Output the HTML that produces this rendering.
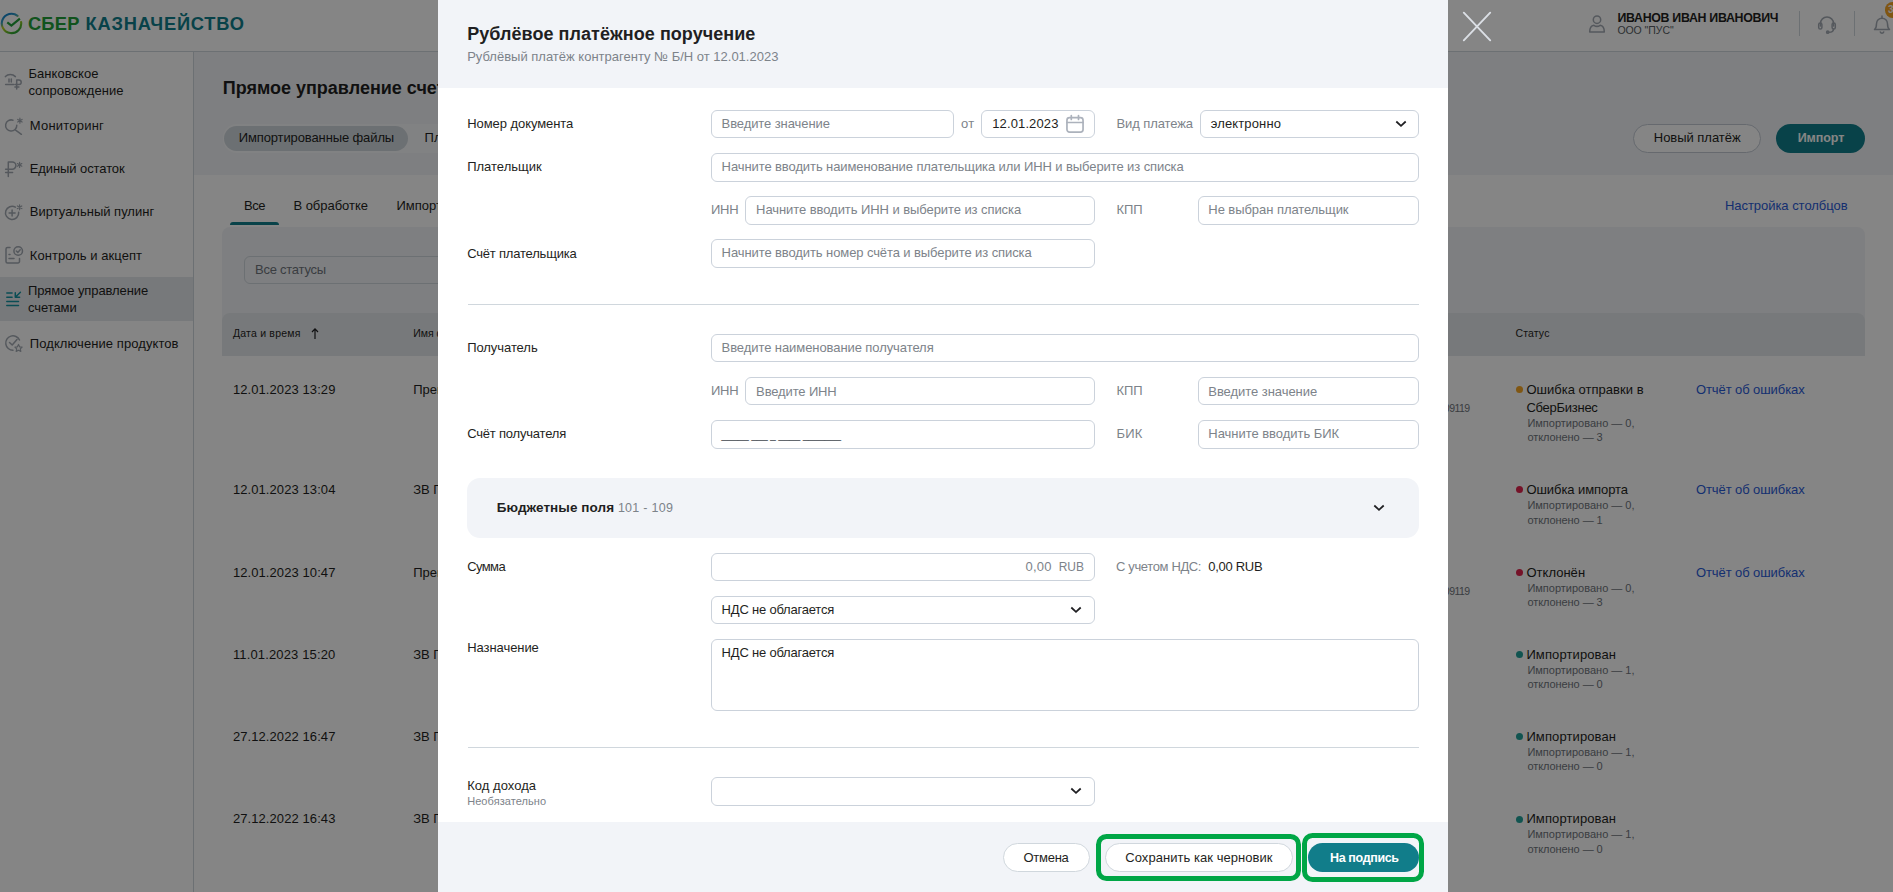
<!DOCTYPE html>
<html lang="ru"><head><meta charset="utf-8"><title>Рублёвое платёжное поручение</title>
<style>
html,body{margin:0;padding:0}
body{width:1893px;height:892px;overflow:hidden;position:relative;background:#fff;font-family:'Liberation Sans', sans-serif;color:#1f1f22}
.t{position:absolute;white-space:nowrap}
.b{position:absolute;box-sizing:border-box}
.i{position:absolute;overflow:visible}
.layer{position:absolute;left:0;top:0;width:1893px;height:892px;overflow:hidden}
#ov{background:rgba(0,0,0,.48)}
</style></head>
<body>
<div class="layer" id="page">
<div class="b" style="left:0px;top:0px;width:1893px;height:51px;background:#fff;"></div>
<div class="b" style="left:0px;top:51px;width:1893px;height:1px;background:#d0d7dd;"></div>
<div class="b" style="left:194px;top:52px;width:1699px;height:123px;background:#f2f4f7;"></div>
<div class="b" style="left:193px;top:52px;width:1px;height:840px;background:#d0d7dd;"></div>
<div class="b" style="left:0px;top:277px;width:193px;height:43.5px;background:#e4e8eb;"></div>
<svg class="i" style="left:0;top:10.5px" width="26" height="26" viewBox="0 0 26 26">
<defs><linearGradient id="lg" x1="0.2" y1="0" x2="0.75" y2="1"><stop offset="0" stop-color="#0a7fd0"/><stop offset=".28" stop-color="#3aa0c0"/><stop offset=".5" stop-color="#c9d21a"/><stop offset=".8" stop-color="#5cb82e"/><stop offset="1" stop-color="#21a038"/></linearGradient></defs>
<path d="M17.6 4.9 A9.7 9.7 0 1 0 21.1 11" fill="none" stroke="url(#lg)" stroke-width="2.1" stroke-linecap="round"/>
<path d="M7.3 11.3 L11.4 14.6 L19.9 7.6" fill="none" stroke="#21a038" stroke-width="2.2"/>
</svg>
<svg class="i" style="left:4px;top:72px" width="20" height="20" viewBox="0 0 20 20" fill="none" stroke="#a3aab3" stroke-width="1.5" stroke-linecap="round" stroke-linejoin="round"><path d="M1.4 4.6 C4 1.9 8.6 1.9 11.4 4.6"/><path d="M5 7 V10 M7.3 7 V10"/><path d="M1.6 12.5 H9.6"/><path d="M12.7 17 V8 H14.9 a2.3 2.3 0 0 1 0 4.6 H10.9 M10.9 14.9 H14.9"/></svg>
<svg class="i" style="left:4px;top:116px" width="20" height="20" viewBox="0 0 20 20" fill="none" stroke="#a3aab3" stroke-width="1.5" stroke-linecap="round" stroke-linejoin="round"><path d="M8.93 4.17 A5.6 5.6 0 1 0 12.8 9.3"/><path d="M11.6 14.2 L17.4 18.3"/><path d="M15.9 2.2 V7.2 M13.7 3.4000000000000004 L18.1 6.0 M18.1 3.4000000000000004 L13.7 6.0" stroke-width="1.2"/></svg>
<svg class="i" style="left:4px;top:159px" width="20" height="20" viewBox="0 0 20 20" fill="none" stroke="#a3aab3" stroke-width="1.5" stroke-linecap="round" stroke-linejoin="round"><path d="M4.3 17.5 V3 H8.3 a3.6 3.6 0 0 1 0 7.2 H1.6 M1.6 13.4 H8.6"/><path d="M15.6 3.4000000000000004 V8.4 M13.399999999999999 4.6000000000000005 L17.8 7.2 M17.8 4.6000000000000005 L13.399999999999999 7.2" stroke-width="1.2"/></svg>
<svg class="i" style="left:4px;top:202px" width="20" height="20" viewBox="0 0 20 20" fill="none" stroke="#a3aab3" stroke-width="1.5" stroke-linecap="round" stroke-linejoin="round"><path d="M11.4 5.18 A6.6 6.6 0 1 0 14.67 10.3"/><path d="M8.1 7.9 V13.9 M5.1 10.9 H11.1"/><path d="M15.6 2.8 V7.8 M13.399999999999999 4.0 L17.8 6.6 M17.8 4.0 L13.399999999999999 6.6" stroke-width="1.2"/></svg>
<svg class="i" style="left:4px;top:245px" width="20" height="20" viewBox="0 0 20 20" fill="none" stroke="#a3aab3" stroke-width="1.5" stroke-linecap="round" stroke-linejoin="round"><path d="M6 2.5 H3.5 a1.5 1.5 0 0 0 -1.5 1.5 V16.5 a1.5 1.5 0 0 0 1.5 1.5 H14 a1.5 1.5 0 0 0 1.5 -1.5 V13.5"/><circle cx="14.2" cy="6" r="4.3"/><path d="M12.3 6 L13.8 7.4 L16.2 4.8"/><path d="M5 9.5 H6 M5 13.5 H10"/></svg>
<svg class="i" style="left:4px;top:290px" width="20" height="20" viewBox="0 0 20 20" fill="none" stroke="#1595a3" stroke-width="1.5" stroke-linecap="round" stroke-linejoin="round"><path d="M2.8 3.1 H8.1 M2.8 7.3 H8.1 M2.8 11.5 H14.5 M2.8 15.5 H14.5"/><path d="M16.4 2.2 L11.5 7 M11.3 2.8 V7.3 H15.6"/></svg>
<svg class="i" style="left:4px;top:333px" width="20" height="20" viewBox="0 0 20 20" fill="none" stroke="#a3aab3" stroke-width="1.5" stroke-linecap="round" stroke-linejoin="round"><path d="M15.5 7 A7.2 7.2 0 1 0 9 17.2"/><path d="M5.5 9.5 L8.2 12 L13 6.5"/><path d="M14.5 11.5 l1.1 2.3 2.5 .3 -1.8 1.8 .5 2.5 -2.3 -1.2 -2.3 1.2 .5 -2.5 -1.8 -1.8 2.5 -.3z" stroke-width="1.2"/></svg>
<svg class="i" style="left:1587px;top:14px" width="20" height="20" viewBox="0 0 20 20" fill="none" stroke="#a3aab3" stroke-width="1.5" stroke-linecap="round" stroke-linejoin="round"><circle cx="10" cy="5.7" r="3.7"/><path d="M2.7 18 c0 -5 2 -6.3 4.2 -6.7 c2 1.4 4.2 1.4 6.2 0 c2.2 .4 4.2 1.7 4.2 6.7 z"/></svg>
<div class="b" style="left:1799px;top:11px;width:1px;height:25px;background:#d0d7dd;"></div>
<svg class="i" style="left:1817px;top:14px" width="20" height="20" viewBox="0 0 20 20" fill="none" stroke="#a3aab3" stroke-width="1.5" stroke-linecap="round" stroke-linejoin="round"><path d="M3.5 12 V9.5 a6.5 6.5 0 0 1 13 0 V12"/><rect x="1.7" y="9" width="3.2" height="6" rx="1.6"/><rect x="15.1" y="9" width="3.2" height="6" rx="1.6"/><path d="M16.5 15 c0 2.5 -2 3.3 -4.5 3.3"/><circle cx="10.7" cy="18.2" r="1.1" fill="#b5bbc3"/></svg>
<div class="b" style="left:1854px;top:11px;width:1px;height:25px;background:#d0d7dd;"></div>
<svg class="i" style="left:1872px;top:14px" width="20" height="20" viewBox="0 0 20 20" fill="none" stroke="#a3aab3" stroke-width="1.5" stroke-linecap="round" stroke-linejoin="round"><path d="M2.5 15.5 H17.5 c-1.7 -1.3 -2 -3 -2 -5.8 a5.5 5.5 0 0 0 -11 0 c0 2.8 -.3 4.5 -2 5.8z"/><path d="M10 2 V4 M8.3 18 a1.8 1.8 0 0 0 3.4 0"/></svg>
<div class="b" style="left:1884.5px;top:2px;width:15.5px;height:15.5px;border-radius:8px;background:#f5a623"></div>
<div class="b" style="left:223px;top:124.3px;width:537px;height:28.4px;background:#f8f9fb;border-radius:14px;"></div>
<div class="b" style="left:223.5px;top:126px;width:184.2px;height:25.2px;background:#d0d7dd;border-radius:13px;"></div>
<div class="b" style="left:1632.8px;top:123.9px;width:128.6px;height:28.8px;background:#fff;border:1px solid #c3cad4;border-radius:15px;"></div>
<div class="b" style="left:1776px;top:123.8px;width:89px;height:29.0px;background:#107f8c;border-radius:15px;"></div>
<div class="b" style="left:230px;top:221.5px;width:49px;height:3.5px;background:#107f8c;border-radius:3px 3px 0 0;"></div>
<div class="b" style="left:222px;top:227px;width:1643px;height:129px;background:#f2f4f7;border-radius:8px 8px 0 0;"></div>
<div class="b" style="left:222px;top:313.3px;width:1643px;height:42.3px;background:#e4e8eb;border-radius:8px 8px 0 0;"></div>
<div class="b" style="left:244px;top:256.3px;width:456px;height:28.0px;background:#f2f4f7;border:1px solid #d0d7dd;border-radius:6px;"></div>
<svg class="i" style="left:310px;top:327px" width="10" height="13" viewBox="0 0 10 13" fill="none" stroke="#1f1f22" stroke-width="1.2"><path d="M5 12 V2 M2 5 L5 1.8 L8 5"/></svg>
<div class="b" style="left:1516px;top:386.3px;width:7px;height:7px;border-radius:4px;background:#f5a623"></div>
<div class="b" style="left:1516px;top:486.3px;width:7px;height:7px;border-radius:4px;background:#e0244d"></div>
<div class="b" style="left:1516px;top:569.1px;width:7px;height:7px;border-radius:4px;background:#e0244d"></div>
<div class="b" style="left:1516px;top:651.1px;width:7px;height:7px;border-radius:4px;background:#21a19a"></div>
<div class="b" style="left:1516px;top:733.4px;width:7px;height:7px;border-radius:4px;background:#21a19a"></div>
<div class="b" style="left:1516px;top:815.9px;width:7px;height:7px;border-radius:4px;background:#21a19a"></div>
<div class="t" style="left:27.9px;top:12px;font-size:18.3px;line-height:23px;color:#21a038;font-weight:700;letter-spacing:0.241px;">СБЕР</div>
<div class="t" style="left:85.6px;top:12px;font-size:18.3px;line-height:23px;color:#107f8c;font-weight:700;letter-spacing:0.776px;">КАЗНАЧЕЙСТВО</div>
<div class="t" style="left:28.4px;top:65px;font-size:13px;line-height:17px;letter-spacing:0.064px;">Банковское</div>
<div class="t" style="left:28.4px;top:82px;font-size:13px;line-height:17px;letter-spacing:0.061px;">сопровождение</div>
<div class="t" style="left:29.8px;top:117px;font-size:13px;line-height:17px;letter-spacing:0.209px;">Мониторинг</div>
<div class="t" style="left:29.8px;top:160px;font-size:13px;line-height:17px;letter-spacing:-0.095px;">Единый остаток</div>
<div class="t" style="left:29.8px;top:203px;font-size:13px;line-height:17px;">Виртуальный пулинг</div>
<div class="t" style="left:29.8px;top:247px;font-size:13px;line-height:17px;letter-spacing:0.053px;">Контроль и акцепт</div>
<div class="t" style="left:28.0px;top:282px;font-size:13px;line-height:17px;letter-spacing:-0.081px;">Прямое управление</div>
<div class="t" style="left:28.0px;top:299px;font-size:13px;line-height:17px;letter-spacing:-0.082px;">счетами</div>
<div class="t" style="left:29.8px;top:335px;font-size:13px;line-height:17px;letter-spacing:0.080px;">Подключение продуктов</div>
<div class="t" style="left:1617.4px;top:10px;font-size:12.4px;line-height:16px;font-weight:700;letter-spacing:-0.314px;">ИВАНОВ ИВАН ИВАНОВИЧ</div>
<div class="t" style="left:1617.4px;top:23px;font-size:10.5px;line-height:14px;color:#565b62;letter-spacing:-0.054px;">ООО "ПУС"</div>
<div class="t" style="left:1887.9px;top:3px;font-size:10px;line-height:13px;color:#fff;font-weight:700;">3</div>
<div class="t" style="left:222.7px;top:77px;font-size:18px;line-height:22px;font-weight:700;">Прямое управление счетами</div>
<div class="t" style="left:238.7px;top:129px;font-size:13px;line-height:17px;letter-spacing:-0.116px;">Импортированные файлы</div>
<div class="t" style="left:424.6px;top:129px;font-size:13px;line-height:17px;">Платёжные документы</div>
<div class="t" style="left:1653.8px;top:129px;font-size:13px;line-height:17px;letter-spacing:-0.034px;">Новый платёж</div>
<div class="t" style="left:1797.7px;top:130px;font-size:12.5px;line-height:16px;color:#fff;font-weight:700;letter-spacing:-0.069px;">Импорт</div>
<div class="t" style="left:244.1px;top:197px;font-size:13px;line-height:17px;letter-spacing:-0.469px;">Все</div>
<div class="t" style="left:293.4px;top:197px;font-size:13px;line-height:17px;letter-spacing:-0.021px;">В обработке</div>
<div class="t" style="left:396.4px;top:197px;font-size:13px;line-height:17px;">Импортированы</div>
<div class="t" style="left:1724.9px;top:197px;font-size:13px;line-height:17px;color:#2a5bd7;letter-spacing:-0.036px;">Настройка столбцов</div>
<div class="t" style="left:255.0px;top:261px;font-size:13px;line-height:17px;color:#70767d;letter-spacing:-0.243px;">Все статусы</div>
<div class="t" style="left:232.9px;top:326px;font-size:10.5px;line-height:14px;letter-spacing:0.215px;">Дата и время</div>
<div class="t" style="left:413.2px;top:326px;font-size:10.5px;line-height:14px;">Имя файла</div>
<div class="t" style="left:1515.4px;top:326px;font-size:10.5px;line-height:14px;letter-spacing:0.166px;">Статус</div>
<div class="t" style="left:232.9px;top:381px;font-size:13px;line-height:17px;letter-spacing:0.086px;">12.01.2023 13:29</div>
<div class="t" style="left:413.2px;top:381px;font-size:13px;line-height:17px;">Препроцессинг.txt</div>
<div class="t" style="left:1526.4px;top:381px;font-size:13px;line-height:17px;letter-spacing:0.021px;">Ошибка отправки в</div>
<div class="t" style="left:1526.4px;top:399px;font-size:13px;line-height:17px;letter-spacing:-0.261px;">СберБизнес</div>
<div class="t" style="left:1527.4px;top:416px;font-size:11px;line-height:14px;color:#70767d;">Импортировано — 0,</div>
<div class="t" style="left:1527.4px;top:430px;font-size:11px;line-height:14px;color:#70767d;letter-spacing:-0.071px;">отклонено — 3</div>
<div class="t" style="left:1695.9px;top:381px;font-size:13px;line-height:17px;color:#2a5bd7;letter-spacing:-0.081px;">Отчёт об ошибках</div>
<div class="t" style="left:1364.4px;top:401px;font-size:10.5px;line-height:14px;color:#70767d;letter-spacing:-0.541px;">40702810000000009119</div>
<div class="t" style="left:232.9px;top:481px;font-size:13px;line-height:17px;letter-spacing:0.086px;">12.01.2023 13:04</div>
<div class="t" style="left:413.2px;top:481px;font-size:13px;line-height:17px;">ЗВ ПП 1.txt</div>
<div class="t" style="left:1526.4px;top:481px;font-size:13px;line-height:17px;letter-spacing:-0.065px;">Ошибка импорта</div>
<div class="t" style="left:1527.4px;top:498px;font-size:11px;line-height:14px;color:#70767d;">Импортировано — 0,</div>
<div class="t" style="left:1527.4px;top:513px;font-size:11px;line-height:14px;color:#70767d;letter-spacing:-0.071px;">отклонено — 1</div>
<div class="t" style="left:1695.9px;top:481px;font-size:13px;line-height:17px;color:#2a5bd7;letter-spacing:-0.081px;">Отчёт об ошибках</div>
<div class="t" style="left:232.9px;top:564px;font-size:13px;line-height:17px;letter-spacing:0.086px;">12.01.2023 10:47</div>
<div class="t" style="left:413.2px;top:564px;font-size:13px;line-height:17px;">Препроцессинг.txt</div>
<div class="t" style="left:1526.4px;top:564px;font-size:13px;line-height:17px;letter-spacing:0.031px;">Отклонён</div>
<div class="t" style="left:1527.4px;top:581px;font-size:11px;line-height:14px;color:#70767d;">Импортировано — 0,</div>
<div class="t" style="left:1527.4px;top:595px;font-size:11px;line-height:14px;color:#70767d;letter-spacing:-0.071px;">отклонено — 3</div>
<div class="t" style="left:1695.9px;top:564px;font-size:13px;line-height:17px;color:#2a5bd7;letter-spacing:-0.081px;">Отчёт об ошибках</div>
<div class="t" style="left:1364.4px;top:584px;font-size:10.5px;line-height:14px;color:#70767d;letter-spacing:-0.541px;">40702810000000009119</div>
<div class="t" style="left:232.9px;top:646px;font-size:13px;line-height:17px;letter-spacing:0.147px;">11.01.2023 15:20</div>
<div class="t" style="left:413.2px;top:646px;font-size:13px;line-height:17px;">ЗВ ПП 2.txt</div>
<div class="t" style="left:1526.4px;top:646px;font-size:13px;line-height:17px;letter-spacing:0.113px;">Импортирован</div>
<div class="t" style="left:1527.4px;top:663px;font-size:11px;line-height:14px;color:#70767d;">Импортировано — 1,</div>
<div class="t" style="left:1527.4px;top:677px;font-size:11px;line-height:14px;color:#70767d;letter-spacing:-0.071px;">отклонено — 0</div>
<div class="t" style="left:232.9px;top:728px;font-size:13px;line-height:17px;letter-spacing:0.086px;">27.12.2022 16:47</div>
<div class="t" style="left:413.2px;top:728px;font-size:13px;line-height:17px;">ЗВ ПП 3.txt</div>
<div class="t" style="left:1526.4px;top:728px;font-size:13px;line-height:17px;letter-spacing:0.113px;">Импортирован</div>
<div class="t" style="left:1527.4px;top:745px;font-size:11px;line-height:14px;color:#70767d;">Импортировано — 1,</div>
<div class="t" style="left:1527.4px;top:759px;font-size:11px;line-height:14px;color:#70767d;letter-spacing:-0.071px;">отклонено — 0</div>
<div class="t" style="left:232.9px;top:810px;font-size:13px;line-height:17px;letter-spacing:0.086px;">27.12.2022 16:43</div>
<div class="t" style="left:413.2px;top:810px;font-size:13px;line-height:17px;">ЗВ ПП 4.txt</div>
<div class="t" style="left:1526.4px;top:810px;font-size:13px;line-height:17px;letter-spacing:0.113px;">Импортирован</div>
<div class="t" style="left:1527.4px;top:827px;font-size:11px;line-height:14px;color:#70767d;">Импортировано — 1,</div>
<div class="t" style="left:1527.4px;top:842px;font-size:11px;line-height:14px;color:#70767d;letter-spacing:-0.071px;">отклонено — 0</div>
</div>
<div class="layer" id="ov"></div>
<div class="layer" id="modal">
<div class="b" style="left:438px;top:0px;width:1010px;height:892px;background:#fff;"></div>
<div class="b" style="left:438px;top:0px;width:1010px;height:87.6px;background:#f2f4f8;"></div>
<div class="b" style="left:438px;top:822px;width:1010px;height:70px;background:#f2f4f8;"></div>
<svg class="i" style="left:1462px;top:11px" width="30" height="31" viewBox="0 0 30 31" fill="none" stroke="#dbdfe5" stroke-width="1.9" stroke-linecap="round"><path d="M1.8 1.7 L28.2 29.3 M28.2 1.7 L1.8 29.3"/></svg>
<div class="b" style="left:711px;top:110px;width:242.6px;height:28px;background:#fff;border:1px solid #cbd2db;border-radius:6px;"></div>
<div class="b" style="left:981px;top:110px;width:113.6px;height:28px;background:#fff;border:1px solid #cbd2db;border-radius:6px;"></div>
<svg class="i" style="left:1065px;top:114px" width="20" height="20" viewBox="0 0 20 20" fill="none" stroke="#acb2bc" stroke-width="1.7" stroke-linecap="round"><rect x="1.95" y="3.55" width="16.1" height="14.5" rx="2.6"/><path d="M2 8.5 H18 M6.3 1.6 V5.4 M13.5 1.6 V5.4"/></svg>
<div class="b" style="left:1200px;top:110px;width:218.7px;height:28px;background:#fff;border:1px solid #cbd2db;border-radius:6px;"></div>
<svg class="i" style="left:1394.9px;top:119.9px" width="12" height="8" viewBox="0 0 12 8" fill="none" stroke="#1f1f22" stroke-width="1.75" stroke-linejoin="miter"><path d="M1.3 1.5 L6 5.8 L10.7 1.5"/></svg>
<div class="b" style="left:711px;top:153.2px;width:707.7px;height:28.4px;background:#fff;border:1px solid #cbd2db;border-radius:6px;"></div>
<div class="b" style="left:745px;top:196.3px;width:349.6px;height:28.4px;background:#fff;border:1px solid #cbd2db;border-radius:6px;"></div>
<div class="b" style="left:1198px;top:196.3px;width:220.7px;height:28.4px;background:#fff;border:1px solid #cbd2db;border-radius:6px;"></div>
<div class="b" style="left:711px;top:239px;width:383.6px;height:28.6px;background:#fff;border:1px solid #cbd2db;border-radius:6px;"></div>
<div class="b" style="left:467.5px;top:303.6px;width:951.2px;height:1.0px;background:#d0d7dd;"></div>
<div class="b" style="left:711px;top:334px;width:707.7px;height:27.7px;background:#fff;border:1px solid #cbd2db;border-radius:6px;"></div>
<div class="b" style="left:745px;top:377.2px;width:349.6px;height:28.3px;background:#fff;border:1px solid #cbd2db;border-radius:6px;"></div>
<div class="b" style="left:1198px;top:377.2px;width:220.7px;height:28.3px;background:#fff;border:1px solid #cbd2db;border-radius:6px;"></div>
<div class="b" style="left:711px;top:420.1px;width:383.6px;height:28.5px;background:#fff;border:1px solid #cbd2db;border-radius:6px;"></div>
<div class="b" style="left:1198px;top:420.1px;width:220.7px;height:28.5px;background:#fff;border:1px solid #cbd2db;border-radius:6px;"></div>
<div class="b" style="left:467.2px;top:478.3px;width:951.5px;height:59.5px;background:#f2f4f8;border-radius:13px;"></div>
<svg class="i" style="left:1373.3px;top:503.6px" width="12" height="8" viewBox="0 0 12 8" fill="none" stroke="#1f1f22" stroke-width="1.75" stroke-linejoin="miter"><path d="M1.3 1.5 L6 5.8 L10.7 1.5"/></svg>
<div class="b" style="left:711px;top:553px;width:383.6px;height:27.6px;background:#fff;border:1px solid #cbd2db;border-radius:6px;"></div>
<div class="b" style="left:711px;top:596.3px;width:383.6px;height:28.2px;background:#fff;border:1px solid #cbd2db;border-radius:6px;"></div>
<svg class="i" style="left:1070.3px;top:606.3px" width="12" height="8" viewBox="0 0 12 8" fill="none" stroke="#1f1f22" stroke-width="1.75" stroke-linejoin="miter"><path d="M1.3 1.5 L6 5.8 L10.7 1.5"/></svg>
<div class="b" style="left:711px;top:639.1px;width:707.7px;height:71.5px;background:#fff;border:1px solid #cbd2db;border-radius:6px;"></div>
<div class="b" style="left:467.5px;top:746.7px;width:951.2px;height:1.0px;background:#d0d7dd;"></div>
<div class="b" style="left:711px;top:777.4px;width:383.6px;height:28.3px;background:#fff;border:1px solid #cbd2db;border-radius:6px;"></div>
<svg class="i" style="left:1070.3px;top:787.3px" width="12" height="8" viewBox="0 0 12 8" fill="none" stroke="#1f1f22" stroke-width="1.75" stroke-linejoin="miter"><path d="M1.3 1.5 L6 5.8 L10.7 1.5"/></svg>
<div class="b" style="left:1002.5px;top:843px;width:87.0px;height:28.5px;background:#fff;border:1px solid #d0d7dd;border-radius:15px;"></div>
<div class="b" style="left:1096px;top:834px;width:204.8px;height:47px;border:5px solid #00a646;border-radius:10.5px;"></div>
<div class="b" style="left:1104.6px;top:843px;width:188.6px;height:28.5px;background:#fff;border:1px solid #d0d7dd;border-radius:15px;"></div>
<div class="b" style="left:1302.2px;top:833px;width:121.8px;height:49px;border:5px solid #00a646;border-radius:10.5px;"></div>
<div class="b" style="left:1308px;top:843px;width:110.9px;height:28.7px;background:#117d8a;border-radius:15px;"></div>
<div class="t" style="left:467.2px;top:23px;font-size:18px;line-height:22px;font-weight:700;letter-spacing:0.050px;">Рублёвое платёжное поручение</div>
<div class="t" style="left:467.2px;top:48px;font-size:13px;line-height:17px;color:#7d838a;">Рублёвый платёж контрагенту № Б/Н от 12.01.2023</div>
<div class="t" style="left:467.2px;top:115px;font-size:13px;line-height:17px;letter-spacing:-0.061px;">Номер документа</div>
<div class="t" style="left:721.6px;top:115px;font-size:13px;line-height:17px;color:#7d838a;letter-spacing:-0.090px;">Введите значение</div>
<div class="t" style="left:960.9px;top:115px;font-size:13px;line-height:17px;color:#7d838a;letter-spacing:0.497px;">от</div>
<div class="t" style="left:992.2px;top:115px;font-size:13px;line-height:17px;letter-spacing:0.132px;">12.01.2023</div>
<div class="t" style="left:1116.4px;top:115px;font-size:13px;line-height:17px;color:#7d838a;letter-spacing:-0.085px;">Вид платежа</div>
<div class="t" style="left:1210.7px;top:115px;font-size:13px;line-height:17px;letter-spacing:0.140px;">электронно</div>
<div class="t" style="left:467.2px;top:158px;font-size:13px;line-height:17px;">Плательщик</div>
<div class="t" style="left:721.6px;top:158px;font-size:13px;line-height:17px;color:#7d838a;letter-spacing:-0.093px;">Начните вводить наименование плательщика или ИНН и выберите из списка</div>
<div class="t" style="left:711.1px;top:201px;font-size:13px;line-height:17px;color:#7d838a;letter-spacing:-0.342px;">ИНН</div>
<div class="t" style="left:756.1px;top:201px;font-size:13px;line-height:17px;color:#7d838a;letter-spacing:-0.071px;">Начните вводить ИНН и выберите из списка</div>
<div class="t" style="left:1116.4px;top:201px;font-size:13px;line-height:17px;color:#7d838a;letter-spacing:-0.022px;">КПП</div>
<div class="t" style="left:1208.3px;top:201px;font-size:13px;line-height:17px;color:#7d838a;letter-spacing:-0.058px;">Не выбран плательщик</div>
<div class="t" style="left:467.2px;top:245px;font-size:13px;line-height:17px;letter-spacing:-0.195px;">Счёт плательщика</div>
<div class="t" style="left:721.6px;top:244px;font-size:13px;line-height:17px;color:#7d838a;letter-spacing:-0.095px;">Начните вводить номер счёта и выберите из списка</div>
<div class="t" style="left:467.2px;top:339px;font-size:13px;line-height:17px;letter-spacing:-0.066px;">Получатель</div>
<div class="t" style="left:721.6px;top:339px;font-size:13px;line-height:17px;color:#7d838a;letter-spacing:-0.078px;">Введите наименование получателя</div>
<div class="t" style="left:711.1px;top:382px;font-size:13px;line-height:17px;color:#7d838a;letter-spacing:-0.342px;">ИНН</div>
<div class="t" style="left:756.1px;top:383px;font-size:13px;line-height:17px;color:#7d838a;letter-spacing:-0.136px;">Введите ИНН</div>
<div class="t" style="left:1116.4px;top:382px;font-size:13px;line-height:17px;color:#7d838a;letter-spacing:-0.022px;">КПП</div>
<div class="t" style="left:1208.3px;top:383px;font-size:13px;line-height:17px;color:#7d838a;letter-spacing:-0.053px;">Введите значение</div>
<div class="t" style="left:467.2px;top:425px;font-size:13px;line-height:17px;letter-spacing:-0.203px;">Счёт получателя</div>
<div class="t" style="left:721.6px;top:430px;font-size:9.6px;line-height:13px;color:#50565d;font-weight:700;letter-spacing:0.076px;-webkit-text-stroke:.4px #50565d;">_____ ___ _ ____ _______</div>
<div class="t" style="left:1116.4px;top:425px;font-size:13px;line-height:17px;color:#7d838a;letter-spacing:0.249px;">БИК</div>
<div class="t" style="left:1208.3px;top:425px;font-size:13px;line-height:17px;color:#7d838a;letter-spacing:-0.034px;">Начните вводить БИК</div>
<div class="t" style="left:496.7px;top:499px;font-size:13.5px;line-height:17px;font-weight:700;letter-spacing:0.077px;">Бюджетные поля</div>
<div class="t" style="left:617.9px;top:500px;font-size:12.5px;line-height:16px;color:#7d838a;letter-spacing:0.275px;">101 - 109</div>
<div class="t" style="left:467.2px;top:558px;font-size:13px;line-height:17px;letter-spacing:-0.600px;">Сумма</div>
<div class="t" style="left:1025.6px;top:558px;font-size:13px;line-height:17px;color:#7d838a;letter-spacing:0.172px;">0,00</div>
<div class="t" style="left:1058.7px;top:559px;font-size:12px;line-height:16px;color:#7d838a;letter-spacing:-0.048px;">RUB</div>
<div class="t" style="left:1116.1px;top:558px;font-size:13px;line-height:17px;color:#7d838a;letter-spacing:-0.374px;">С учетом НДС:</div>
<div class="t" style="left:1208.3px;top:558px;font-size:13px;line-height:17px;letter-spacing:-0.297px;">0,00 RUB</div>
<div class="t" style="left:721.6px;top:601px;font-size:13px;line-height:17px;letter-spacing:-0.203px;">НДС не облагается</div>
<div class="t" style="left:467.2px;top:639px;font-size:13px;line-height:17px;letter-spacing:-0.063px;">Назначение</div>
<div class="t" style="left:721.6px;top:644px;font-size:13px;line-height:17px;letter-spacing:-0.203px;">НДС не облагается</div>
<div class="t" style="left:467.2px;top:777px;font-size:13px;line-height:17px;letter-spacing:0.040px;">Код дохода</div>
<div class="t" style="left:467.2px;top:794px;font-size:11px;line-height:14px;color:#7d838a;letter-spacing:0.060px;">Необязательно</div>
<div class="t" style="left:1023.4px;top:849px;font-size:13px;line-height:17px;letter-spacing:-0.243px;">Отмена</div>
<div class="t" style="left:1125.3px;top:849px;font-size:13px;line-height:17px;letter-spacing:0.045px;">Сохранить как черновик</div>
<div class="t" style="left:1330.0px;top:850px;font-size:12.5px;line-height:16px;color:#fff;font-weight:700;letter-spacing:-0.368px;">На подпись</div>
</div>
</body></html>
